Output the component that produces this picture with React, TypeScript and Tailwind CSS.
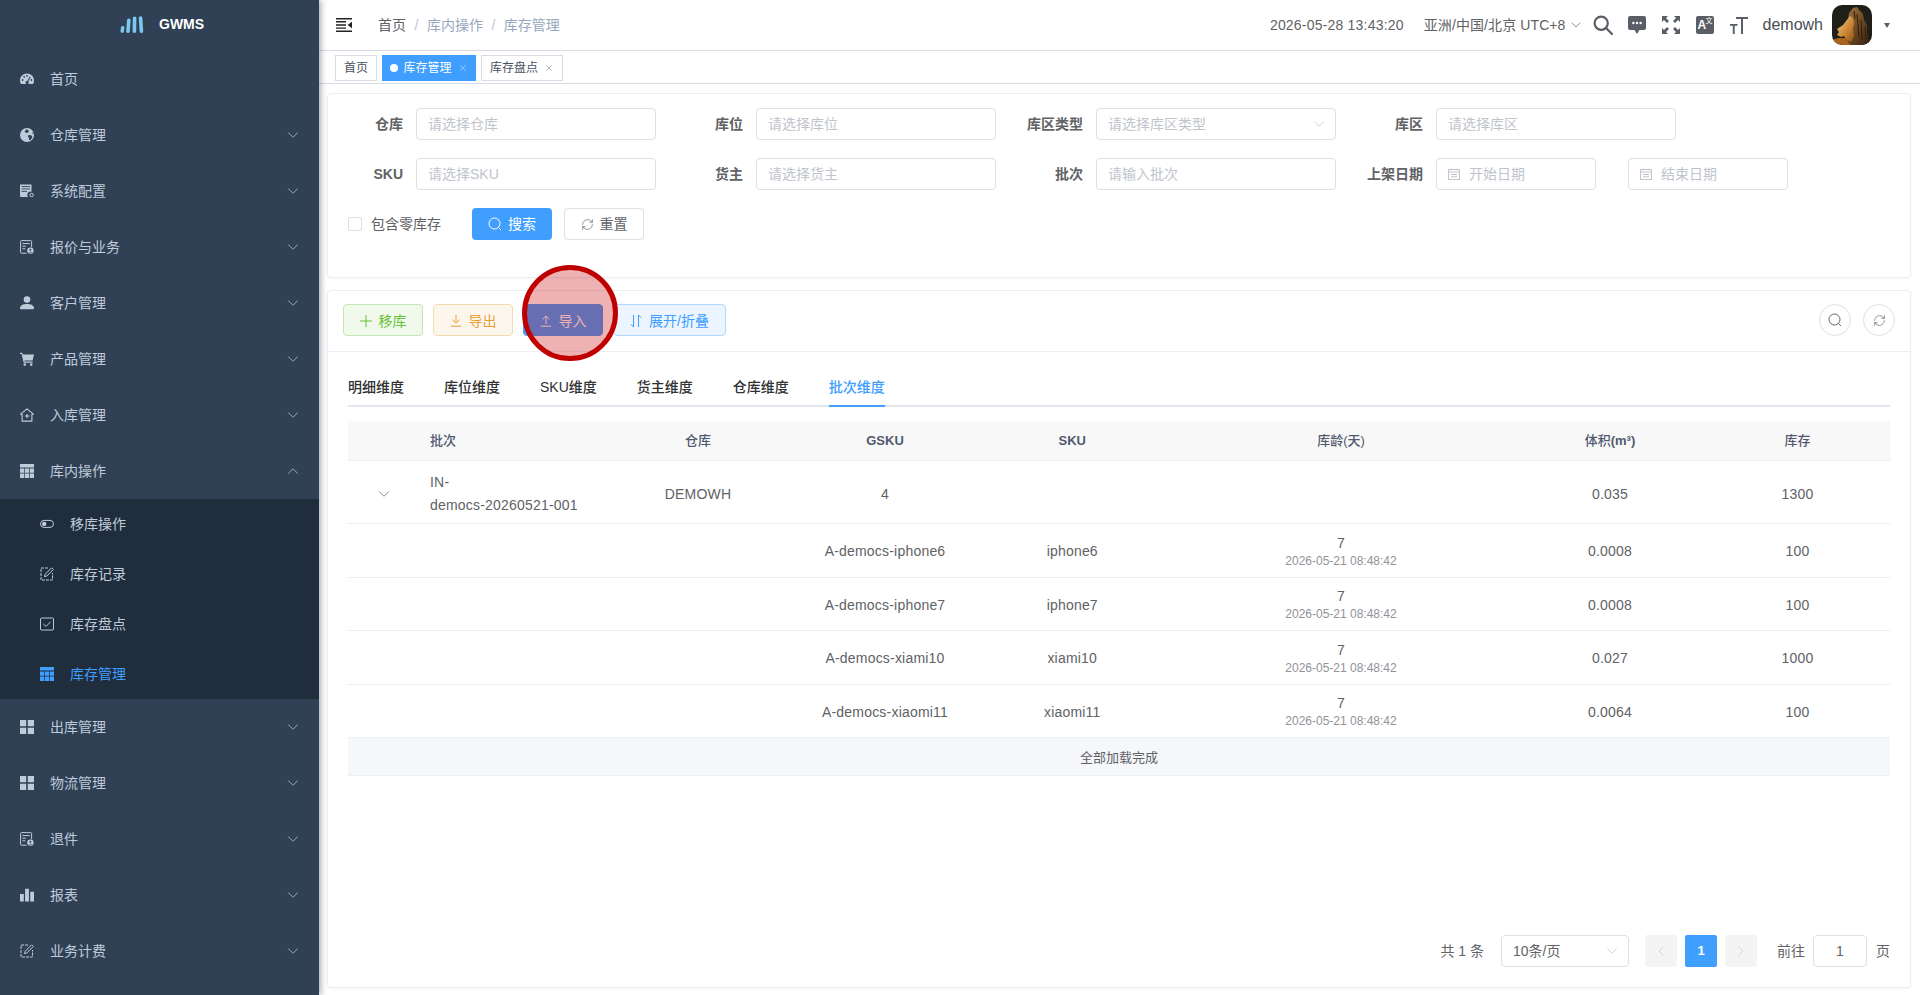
import { ChevronDown, ChevronUp, ChevronLeft, ChevronRight, RefreshCw, X } from "lucide-react";
import type { ReactNode } from "react";

type IconProps = { className?: string };

const Svg = ({ className = "w-[14px] h-[14px]", children }: IconProps & { children: ReactNode }) => (
  <svg viewBox="0 0 14 14" fill="currentColor" className={`${className} shrink-0`}>
    {children}
  </svg>
);

// sidebar icons, all drawn on a 14 box
const GaugeIcon = (p: IconProps) => (
  <Svg {...p}>
    <path d="M7 1.5C3.1 1.5 0 4.6 0 8.4c0 1.5.4 2.7 1 3.6h12c.6-.9 1-2.1 1-3.6 0-3.8-3.1-6.9-7-6.9z" />
    <circle cx="2.6" cy="8" r=".9" fill="#304156" />
    <circle cx="4.2" cy="4.8" r=".9" fill="#304156" />
    <circle cx="7" cy="3.8" r=".9" fill="#304156" />
    <circle cx="11.4" cy="8" r=".9" fill="#304156" />
    <path d="M9.8 4.6l.9.5-2.4 4.3a1.6 1.6 0 1 1-1-.5z" fill="#304156" />
  </Svg>
);
const GlobeIcon = (p: IconProps) => (
  <Svg {...p}>
    <circle cx="7" cy="7" r="7" />
    <path d="M6.5 1.2L9 2.6 8.2 4.6 6 5 4.6 3.6zM8.4 7l3.4.6.6 2-2.2 2.6-1.2-.4-.2-2.4-1-1.2zM13 4l.6 2-1.6-.6z" fill="#304156" />
  </Svg>
);
const ServerDocIcon = (p: IconProps) => (
  <Svg {...p}>
    <path d="M0 .5h11.5v7.3a3.2 3.2 0 0 0-3.4 5.2H1a1 1 0 0 1-1-1z" />
    <path d="M1.5 2.6h8.5M1.5 5h8.5M1.5 7.4h5.5" stroke="#304156" strokeWidth=".9" />
    <circle cx="11.6" cy="11" r="1.7" fill="none" stroke="currentColor" strokeWidth="1" />
  </Svg>
);
const QuoteDocIcon = (p: IconProps) => (
  <Svg {...p}>
    <path d="M6.5 13.2H1.6a1 1 0 0 1-1-1V1.6a1 1 0 0 1 1-1h9a1 1 0 0 1 1 1v5.6" fill="none" stroke="currentColor" strokeWidth="1" />
    <path d="M2.4 3.6h7.4M2.4 6.2h3.4M2.4 8.8h3" stroke="currentColor" strokeWidth="1" />
    <circle cx="10.4" cy="10.6" r="3.2" />
    <circle cx="10.4" cy="9.8" r="1" fill="#304156" />
    <path d="M8.8 12.4c.3-1 3-1 3.2 0z" fill="#304156" />
  </Svg>
);
const UserIcon = (p: IconProps) => (
  <Svg {...p}>
    <circle cx="7" cy="3.6" r="3.3" />
    <path d="M0 12.4c0-3 3-4.4 7-4.4s7 1.4 7 4.4c0 .5-.4.8-.8.8H.8c-.4 0-.8-.3-.8-.8z" />
  </Svg>
);
const CartIcon = (p: IconProps) => (
  <Svg {...p}>
    <path d="M0 .8h2.3l.5 1.6H14l-1.4 6.2H4.5l.2 1h7.9v1.1H3.7L1.6 1.9H0z" />
    <circle cx="4.8" cy="12.6" r="1.3" />
    <circle cx="11.2" cy="12.6" r="1.3" />
  </Svg>
);
const HomeInIcon = (p: IconProps) => (
  <Svg {...p}>
    <path d="M7 .9L.6 6.2h1.5v6.9h9.8V6.2h1.5z" fill="none" stroke="currentColor" strokeWidth="1.1" strokeLinejoin="round" />
    <path d="M9.6 8H6.2M7.6 6.4L5.8 8l1.8 1.6" fill="none" stroke="currentColor" strokeWidth="1.1" />
  </Svg>
);
const TableIcon = (p: IconProps) => (
  <Svg {...p}>
    <path d="M0 0h14v3.6H0zM0 4.4h4.2v4.3H0zM4.9 4.4h4.2v4.3H4.9zM9.8 4.4H14v4.3H9.8zM0 9.4h4.2V14H0zM4.9 9.4h4.2V14H4.9zM9.8 9.4H14V14H9.8z" />
  </Svg>
);
const GridIcon = (p: IconProps) => (
  <Svg {...p}>
    <path d="M0 0h6.2v6.2H0zM7.8 0H14v6.2H7.8zM0 7.8h6.2V14H0zM7.8 7.8H14V14H7.8z" />
  </Svg>
);
const BarsIcon = (p: IconProps) => (
  <Svg {...p}>
    <path d="M0 6h3.8v7.5H0zM5.1 .8h3.8v12.7H5.1zM10.2 3.8H14v9.7h-3.8z" />
  </Svg>
);
const EditIcon = (p: IconProps) => (
  <Svg {...p}>
    <path d="M8 1H1v12h11.5V6" fill="none" stroke="currentColor" strokeWidth="1" strokeDasharray="3 1" />
    <path d="M11.6.8l1.7 1.7-6.5 6.5-2.3.6.6-2.3z" fill="none" stroke="currentColor" strokeWidth="1" />
  </Svg>
);
const ToggleIcon = (p: IconProps) => (
  <Svg {...p}>
    <rect x=".5" y="3.4" width="13" height="7" rx="3.5" fill="none" stroke="currentColor" strokeWidth="1" />
    <circle cx="4.2" cy="6.9" r="2.2" />
  </Svg>
);
const CheckSquareIcon = (p: IconProps) => (
  <Svg {...p}>
    <rect x=".5" y="1" width="13" height="12" rx="1" fill="none" stroke="currentColor" strokeWidth="1" />
    <path d="M3.4 7l2.6 2.4 4.6-4.6" fill="none" stroke="currentColor" strokeWidth="1" />
  </Svg>
);

const menuTop = [
  { label: "仓库管理", icon: GlobeIcon },
  { label: "系统配置", icon: ServerDocIcon },
  { label: "报价与业务", icon: QuoteDocIcon },
  { label: "客户管理", icon: UserIcon },
  { label: "产品管理", icon: CartIcon },
  { label: "入库管理", icon: HomeInIcon },
];

const menuSub = [
  { label: "移库操作", icon: ToggleIcon },
  { label: "库存记录", icon: EditIcon },
  { label: "库存盘点", icon: CheckSquareIcon },
  { label: "库存管理", icon: TableIcon, active: true },
];

const menuBottom = [
  { label: "出库管理", icon: GridIcon },
  { label: "物流管理", icon: GridIcon },
  { label: "退件", icon: QuoteDocIcon },
  { label: "报表", icon: BarsIcon },
  { label: "业务计费", icon: EditIcon },
];

function MenuItem({ label, icon: Icon, open, noArrow }: { label: string; icon: (p: IconProps) => ReactNode; open?: boolean; noArrow?: boolean }) {
  return (
    <div className="flex h-14 items-center pl-5 pr-[17px] text-sm text-[#bfcbd9]">
      <Icon />
      <span className="ml-4 flex-1">{label}</span>
      {!noArrow && (open ? <ChevronUp size={18} strokeWidth={1} /> : <ChevronDown size={18} strokeWidth={1} />)}
    </div>
  );
}

function Sidebar() {
  return (
    <aside className="relative z-10 h-[995px] w-[319px] shrink-0 overflow-hidden bg-[#304156] shadow-[2px_0_6px_rgba(0,21,41,0.35)]">
      <div className="mb-[3px] flex h-12 items-center pl-[120px]">
        <svg viewBox="0 0 24 17" className="h-[17px] w-6">
          <g stroke="#7cc8ee" strokeLinecap="round" fill="none">
            <path d="M2.2 15.2l.5-3.6" strokeWidth="3.4" />
            <path d="M8 15.2l.8-11" strokeWidth="3.6" />
            <path d="M14.4 15.2l.2-13" strokeWidth="3.6" />
            <path d="M21.4 15.2L20.6 2" strokeWidth="3.6" />
          </g>
        </svg>
        <span className="ml-[15px] text-sm font-bold text-white">GWMS</span>
      </div>
      <MenuItem label="首页" icon={GaugeIcon} noArrow />
      {menuTop.map((m) => (
        <MenuItem key={m.label} label={m.label} icon={m.icon} />
      ))}
      <MenuItem label="库内操作" icon={TableIcon} open />
      <div className="bg-[#1f2d3d]">
        {menuSub.map((m) => (
          <div key={m.label} className={`flex h-[50px] items-center pl-10 text-sm ${m.active ? "text-[#409eff]" : "text-[#bfcbd9]"}`}>
            <m.icon />
            <span className="ml-4">{m.label}</span>
          </div>
        ))}
      </div>
      {menuBottom.map((m) => (
        <MenuItem key={m.label} label={m.label} icon={m.icon} />
      ))}
    </aside>
  );
}

function Avatar() {
  return (
    <svg viewBox="0 0 40 40" className="h-10 w-10 shrink-0 rounded-[10px]">
      <defs>
        <linearGradient id="mane" x1="0" y1="0" x2="1" y2="1">
          <stop offset="0" stopColor="#a87c3e" />
          <stop offset="0.55" stopColor="#6a4522" />
          <stop offset="1" stopColor="#33210f" />
        </linearGradient>
        <linearGradient id="face" x1="0" y1="0" x2="1" y2="1">
          <stop offset="0" stopColor="#f2cb88" />
          <stop offset="0.6" stopColor="#c9822f" />
          <stop offset="1" stopColor="#8a5220" />
        </linearGradient>
      </defs>
      <rect width="40" height="40" fill="#1f1e19" />
      <path d="M21 3l4-1 3 4 3 3 1 6 3 5v8l3 12H12l1-9-1-8 4-8 1-7z" fill="url(#mane)" />
      <path d="M18 11l-4 5-3 4-6 4 2 3-2 3 4 2 3-1 2 3 5 3 3-6-1-7 1-6-1-5z" fill="url(#face)" />
      <path d="M0 35l6-2 8 0 4 7H0z" fill="#a8651f" />
      <path d="M25 9l2 23M29 15l1 20M22 6l1 8M33 22l1 12" stroke="#2e1d0e" strokeWidth="1" />
    </svg>
  );
}

function TopBar() {
  return (
    <header className="flex h-[51px] items-center border-b border-[#d8dce5] pl-[17px] pr-[30px]">
      <svg viewBox="0 0 16 14" className="h-[14px] w-4 text-[#222]" fill="currentColor">
        <path d="M0 0h16v1.6H0zM0 12.4h16V14H0zM0 6.2h10v1.6H0zM0 3.1h10v1.4H0zM0 9.4h10v1.4H0zM16 3.8v6.4L11.6 7z" />
      </svg>
      <nav className="ml-[26px] flex items-center text-sm">
        <span className="text-[#606266]">首页</span>
        <span className="mx-[8.5px] text-[#c0c4cc]">/</span>
        <span className="text-[#97a8be]">库内操作</span>
        <span className="mx-[8.5px] text-[#c0c4cc]">/</span>
        <span className="text-[#97a8be]">库存管理</span>
      </nav>
      <div className="ml-auto flex items-center text-[#5a5e66]">
        <span className="text-sm tracking-[0.2px] text-[#606266]">2026-05-28 13:43:20</span>
        <span className="ml-5 text-sm tracking-[0.1px] text-[#606266]">亚洲/中国/北京 UTC+8</span>
        <ChevronDown size={16} strokeWidth={1} className="ml-[2px] text-[#606266]" />
        <svg viewBox="0 0 20 20" className="ml-[9px] h-5 w-5" fill="none" stroke="currentColor" strokeWidth="2.2">
          <circle cx="8.2" cy="8.2" r="6.6" />
          <path d="M13 13l6 6" strokeLinecap="round" />
        </svg>
        <svg viewBox="0 0 18 20" className="ml-[15px] h-5 w-[18px]" fill="currentColor">
          <path d="M2 1h14a2 2 0 0 1 2 2v10a2 2 0 0 1-2 2h-4.5L9 19l-2.5-4H2a2 2 0 0 1-2-2V3a2 2 0 0 1 2-2z" />
          <circle cx="5.4" cy="8" r="1.2" fill="#fff" />
          <circle cx="9" cy="8" r="1.2" fill="#fff" />
          <circle cx="12.6" cy="8" r="1.2" fill="#fff" />
        </svg>
        <svg viewBox="0 0 18 18" className="ml-4 h-[18px] w-[18px]" fill="currentColor">
          <path d="M0 0h6L4 2l3 3-2 2-3-3-2 2zM18 0v6l-2-2-3 3-2-2 3-3-2-2zM0 18v-6l2 2 3-3 2 2-3 3 2 2zM18 18h-6l2-2-3-3 2-2 3 3 2-2z" />
        </svg>
        <span className="relative ml-4 flex h-[18px] w-[18px] items-center rounded-[2px] bg-[#5a5e66] pl-[2px] text-[12px] font-bold leading-none text-white">
          A
          <span className="absolute right-[1px] top-0 text-[7px] font-normal leading-[9px] text-white">文</span>
        </span>
        <svg viewBox="0 0 18 18" className="ml-4 h-[18px] w-[18px]" fill="currentColor">
          <path d="M6 1h12v2h-5v15h-2V3H6zM0 8h7.5v1.8H4.7V18H2.8V9.8H0z" />
        </svg>
        <span className="ml-[15px] text-base text-[#4a4d52]">demowh</span>
        <span className="ml-[9px]">
          <Avatar />
        </span>
        <span className="ml-3 h-0 w-0 border-x-[3.5px] border-t-[5px] border-x-transparent border-t-[#5a5e66]" />
      </div>
    </header>
  );
}

function TagBar() {
  return (
    <div className="flex h-[33px] items-start gap-[5px] border-b border-[#d8dce5] pl-4 pt-1 text-xs text-[#495060]">
      <div className="flex h-[26px] w-[42px] items-center justify-center border border-[#d8dce5]">首页</div>
      <div className="flex h-[26px] w-[94px] items-center justify-center bg-[#409eff] text-white">
        <span className="mr-[5px] h-2 w-2 rounded-full bg-white" />
        库存管理
        <X size={10} strokeWidth={1} className="ml-[6px]" />
      </div>
      <div className="flex h-[26px] w-[82px] items-center justify-center border border-[#d8dce5]">
        库存盘点
        <X size={10} strokeWidth={1} className="ml-[6px]" />
      </div>
    </div>
  );
}

const inputBase = "h-8 rounded-[4px] border border-[#dcdfe6] bg-white text-sm text-[#606266] outline-none placeholder:text-[#c0c4cc]";

function Field({ label, children }: { label: string; children: ReactNode }) {
  return (
    <div className="flex items-center">
      <label className="flex w-[55px] shrink-0 justify-end whitespace-nowrap text-sm font-bold text-[#606266]">{label}</label>
      <span className="w-[13px] shrink-0" />
      {children}
    </div>
  );
}

function TextField({ label, placeholder }: { label: string; placeholder: string }) {
  return (
    <Field label={label}>
      <input readOnly placeholder={placeholder} className={`${inputBase} w-[240px] px-[11px]`} />
    </Field>
  );
}

function DateInput({ placeholder }: { placeholder: string }) {
  return (
    <div className={`${inputBase} flex w-[160px] items-center pl-[11px]`}>
      <svg viewBox="0 0 12 12" className="h-3 w-3 text-[#c0c4cc]" fill="none" stroke="currentColor" strokeWidth="1">
        <rect x=".5" y="1.5" width="11" height="10" />
        <path d="M.5 4h11M3 .5v2M9 .5v2M3 6.5h6M3 8.8h6" />
      </svg>
      <span className="ml-[9px] text-[#c0c4cc]">{placeholder}</span>
    </div>
  );
}

function SearchCard() {
  return (
    <section className="mx-2 mr-[9px] mt-[9px] flex h-[185px] flex-col gap-[18px] rounded-[4px] border border-[#ebeef5] bg-white px-5 pt-[14px] shadow-[0_1px_3px_rgba(0,0,0,0.04)]">
      <div className="flex gap-8">
        <TextField label="仓库" placeholder="请选择仓库" />
        <TextField label="库位" placeholder="请选择库位" />
        <Field label="库区类型">
          <div className={`${inputBase} flex w-[240px] items-center justify-between pl-[11px] pr-[7px]`}>
            <span className="text-[#c0c4cc]">请选择库区类型</span>
            <ChevronDown size={18} strokeWidth={1} className="text-[#c0c4cc]" />
          </div>
        </Field>
        <TextField label="库区" placeholder="请选择库区" />
      </div>
      <div className="flex gap-8">
        <TextField label="SKU" placeholder="请选择SKU" />
        <TextField label="货主" placeholder="请选择货主" />
        <TextField label="批次" placeholder="请输入批次" />
        <Field label="上架日期">
          <div className="flex gap-8">
            <DateInput placeholder="开始日期" />
            <DateInput placeholder="结束日期" />
          </div>
        </Field>
      </div>
      <div className="flex h-8 items-center">
        <span className="h-[14px] w-[14px] rounded-[2px] border border-[#dcdfe6]" />
        <span className="ml-[9px] w-[101px] text-sm text-[#606266]">包含零库存</span>
        <button className="flex h-8 w-20 items-center justify-center gap-[6px] rounded-[4px] bg-[#409eff] text-sm text-white">
          <svg viewBox="0 0 14 14" className="h-[14px] w-[14px]" fill="none" stroke="currentColor" strokeWidth="1">
            <circle cx="6.5" cy="6.5" r="5.5" />
            <path d="M10.5 10.5l2.5 2.5" />
          </svg>
          搜索
        </button>
        <button className="ml-3 flex h-8 w-20 items-center justify-center gap-[6px] rounded-[4px] border border-[#dcdfe6] bg-white text-sm text-[#606266]">
          <RefreshCw size={13} strokeWidth={1.2} />
          重置
        </button>
      </div>
    </section>
  );
}

function ToolbarButton({ className, icon, label, width = "w-20" }: { className: string; icon: ReactNode; label: string; width?: string }) {
  return (
    <button className={`flex h-8 items-center justify-center gap-[7px] rounded-[4px] border pt-px text-sm ${width} ${className}`}>
      {icon}
      {label}
    </button>
  );
}

const tabs = ["明细维度", "库位维度", "SKU维度", "货主维度", "仓库维度", "批次维度"];

// columns add up to the table width of 1543
const gridCols = "grid grid-cols-[72px_184.5px_187px_187px_187.5px_350px_188px_187px]";

const subRows = [
  { gsku: "A-democs-iphone6", sku: "iphone6", vol: "0.0008", stock: "100" },
  { gsku: "A-democs-iphone7", sku: "iphone7", vol: "0.0008", stock: "100" },
  { gsku: "A-democs-xiami10", sku: "xiami10", vol: "0.027", stock: "1000" },
  { gsku: "A-democs-xiaomi11", sku: "xiaomi11", vol: "0.0064", stock: "100" },
];

function BatchTable() {
  return (
    <div className="text-sm tracking-[0.2px] text-[#606266]">
      <div className={`${gridCols} h-10 items-center border-b border-[#ebeef5] bg-[#f8f8f9] pt-px text-[13px] font-semibold tracking-normal text-[#515a6e]`}>
        <div />
        <div className="px-[10px] font-medium">批次</div>
        <div className="text-center font-medium">仓库</div>
        <div className="text-center">GSKU</div>
        <div className="text-center">SKU</div>
        <div className="text-center font-medium">库龄(天)</div>
        <div className="text-center">
          <span className="font-medium">体积</span>(m³)
        </div>
        <div className="text-center font-medium">库存</div>
      </div>
      <div className={`${gridCols} h-[63px] items-center border-b border-[#ebeef5] pt-[3px]`}>
        <div className="flex justify-center text-[#606266]">
          <ChevronDown size={18} strokeWidth={1} />
        </div>
        <div className="px-[10px] leading-[23px]">
          IN-
          <br />
          democs-20260521-001
        </div>
        <div className="text-center">DEMOWH</div>
        <div className="text-center">4</div>
        <div />
        <div />
        <div className="text-center">0.035</div>
        <div className="text-center">1300</div>
      </div>
      {subRows.map((r) => (
        <div key={r.gsku} className={`${gridCols} h-[53.5px] items-center border-b border-[#ebeef5] pt-[2px]`}>
          <div />
          <div />
          <div />
          <div className="whitespace-nowrap text-center">{r.gsku}</div>
          <div className="text-center">{r.sku}</div>
          <div className="text-center leading-[19px]">
            7
            <div className="text-xs tracking-normal text-[#909399]">2026-05-21 08:48:42</div>
          </div>
          <div className="text-center">{r.vol}</div>
          <div className="text-center">{r.stock}</div>
        </div>
      ))}
      <div className="flex h-[38px] items-center justify-center border-b border-[#ebeef5] bg-[#f5f7fa] pt-1 text-[13px] tracking-normal text-[#606266]">全部加载完成</div>
    </div>
  );
}

function Pagination() {
  return (
    <div className="mt-auto flex items-center justify-end text-sm text-[#606266]">
      <span>共 1 条</span>
      <div className={`${inputBase} ml-[17px] flex w-[128px] items-center justify-between pl-[11px] pr-[7px]`}>
        <span>10条/页</span>
        <ChevronDown size={18} strokeWidth={1} className="text-[#c0c4cc]" />
      </div>
      <span className="ml-4 flex h-8 w-8 items-center justify-center rounded-[2px] bg-[#f4f4f5] text-[#c0c4cc]">
        <ChevronLeft size={16} strokeWidth={1} />
      </span>
      <span className="ml-2 flex h-8 w-8 items-center justify-center rounded-[2px] bg-[#409eff] text-[13px] font-bold text-white">1</span>
      <span className="ml-2 flex h-8 w-8 items-center justify-center rounded-[2px] bg-[#f4f4f5] text-[#c0c4cc]">
        <ChevronRight size={16} strokeWidth={1} />
      </span>
      <span className="ml-5">前往</span>
      <div className={`${inputBase} ml-2 flex w-[54px] items-center justify-center`}>1</div>
      <span className="ml-[9px]">页</span>
    </div>
  );
}

function ResultCard() {
  return (
    <section className="relative mx-2 mr-[9px] mt-3 flex h-[698px] flex-col rounded-[4px] border border-[#ebeef5] bg-white pb-5 shadow-[0_1px_3px_rgba(0,0,0,0.04)]">
      <div className="flex h-[61px] items-start border-b border-[#ebeef5] px-[15px] pt-[13px]">
        <div className="flex gap-[10px]">
          <ToolbarButton
            className="border-[#c2e7b0] bg-[#f0f9eb] text-[#67c23a]"
            label="移库"
            icon={
              <svg viewBox="0 0 12 12" className="h-3 w-3" fill="none" stroke="currentColor" strokeWidth="1">
                <path d="M6 0v12M0 6h12" />
              </svg>
            }
          />
          <ToolbarButton
            className="border-[#f5dab1] bg-[#fdf6ec] text-[#e6a23c]"
            label="导出"
            icon={
              <svg viewBox="0 0 12 12" className="h-3 w-3" fill="none" stroke="currentColor" strokeWidth="1">
                <path d="M6 0v8M2.6 4.8L6 8l3.4-3.2M.8 11.2h10.4" />
              </svg>
            }
          />
          <ToolbarButton
            className="border-[#409eff] bg-[#409eff] text-white"
            label="导入"
            icon={
              <svg viewBox="0 0 12 12" className="h-3 w-3" fill="none" stroke="currentColor" strokeWidth="1">
                <path d="M6 9V1M2.6 4.2L6 1l3.4 3.2M.8 11.2h10.4" />
              </svg>
            }
          />
          <ToolbarButton
            width="w-[113px]"
            className="border-[#b3d8ff] bg-[#ecf5ff] text-[#409eff]"
            label="展开/折叠"
            icon={
              <svg viewBox="0 0 12 14" className="h-[14px] w-3" fill="none" stroke="currentColor" strokeWidth="1">
                <path d="M3.5 1v12M.8 10.2l2.7 2.8M8.5 13V1M8.5 1l2.7 2.8" />
              </svg>
            }
          />
        </div>
        <div className="ml-auto flex gap-3 text-[#606266]">
          <span className="flex h-8 w-8 items-center justify-center rounded-full border border-[#dcdfe6]">
            <svg viewBox="0 0 14 14" className="h-[14px] w-[14px]" fill="none" stroke="currentColor" strokeWidth="1">
              <circle cx="6.5" cy="6.5" r="5.5" />
              <path d="M10.5 10.5l2.5 2.5" />
            </svg>
          </span>
          <span className="flex h-8 w-8 items-center justify-center rounded-full border border-[#dcdfe6]">
            <RefreshCw size={13} strokeWidth={1.2} />
          </span>
        </div>
      </div>
      <div className="flex flex-1 flex-col px-5">
        <div className="mb-[14px] flex h-[55px] gap-10 border-b-2 border-[#e4e7ed]">
          {tabs.map((t) => (
            <div
              key={t}
              className={`-mb-[2px] h-[55px] pt-[25px] text-sm font-medium leading-5 ${t === "批次维度" ? "border-b-2 border-[#409eff] text-[#409eff]" : "text-[#303133]"}`}
            >
              {t}
            </div>
          ))}
        </div>
        <BatchTable />
        <Pagination />
      </div>
      {/* click marker sitting over the import button */}
      <div className="pointer-events-none absolute left-[194px] top-[-26px] h-[96px] w-[96px] rounded-full border-[5px] border-[#c00000] bg-[rgba(200,0,0,0.3)]" />
    </section>
  );
}

export default function App() {
  return (
    <div className="flex h-[995px] w-[1920px] overflow-hidden bg-white font-['Liberation_Sans','Noto_Sans_CJK_SC',sans-serif]">
      <Sidebar />
      <main className="min-w-0 flex-1">
        <TopBar />
        <TagBar />
        <SearchCard />
        <ResultCard />
      </main>
    </div>
  );
}
